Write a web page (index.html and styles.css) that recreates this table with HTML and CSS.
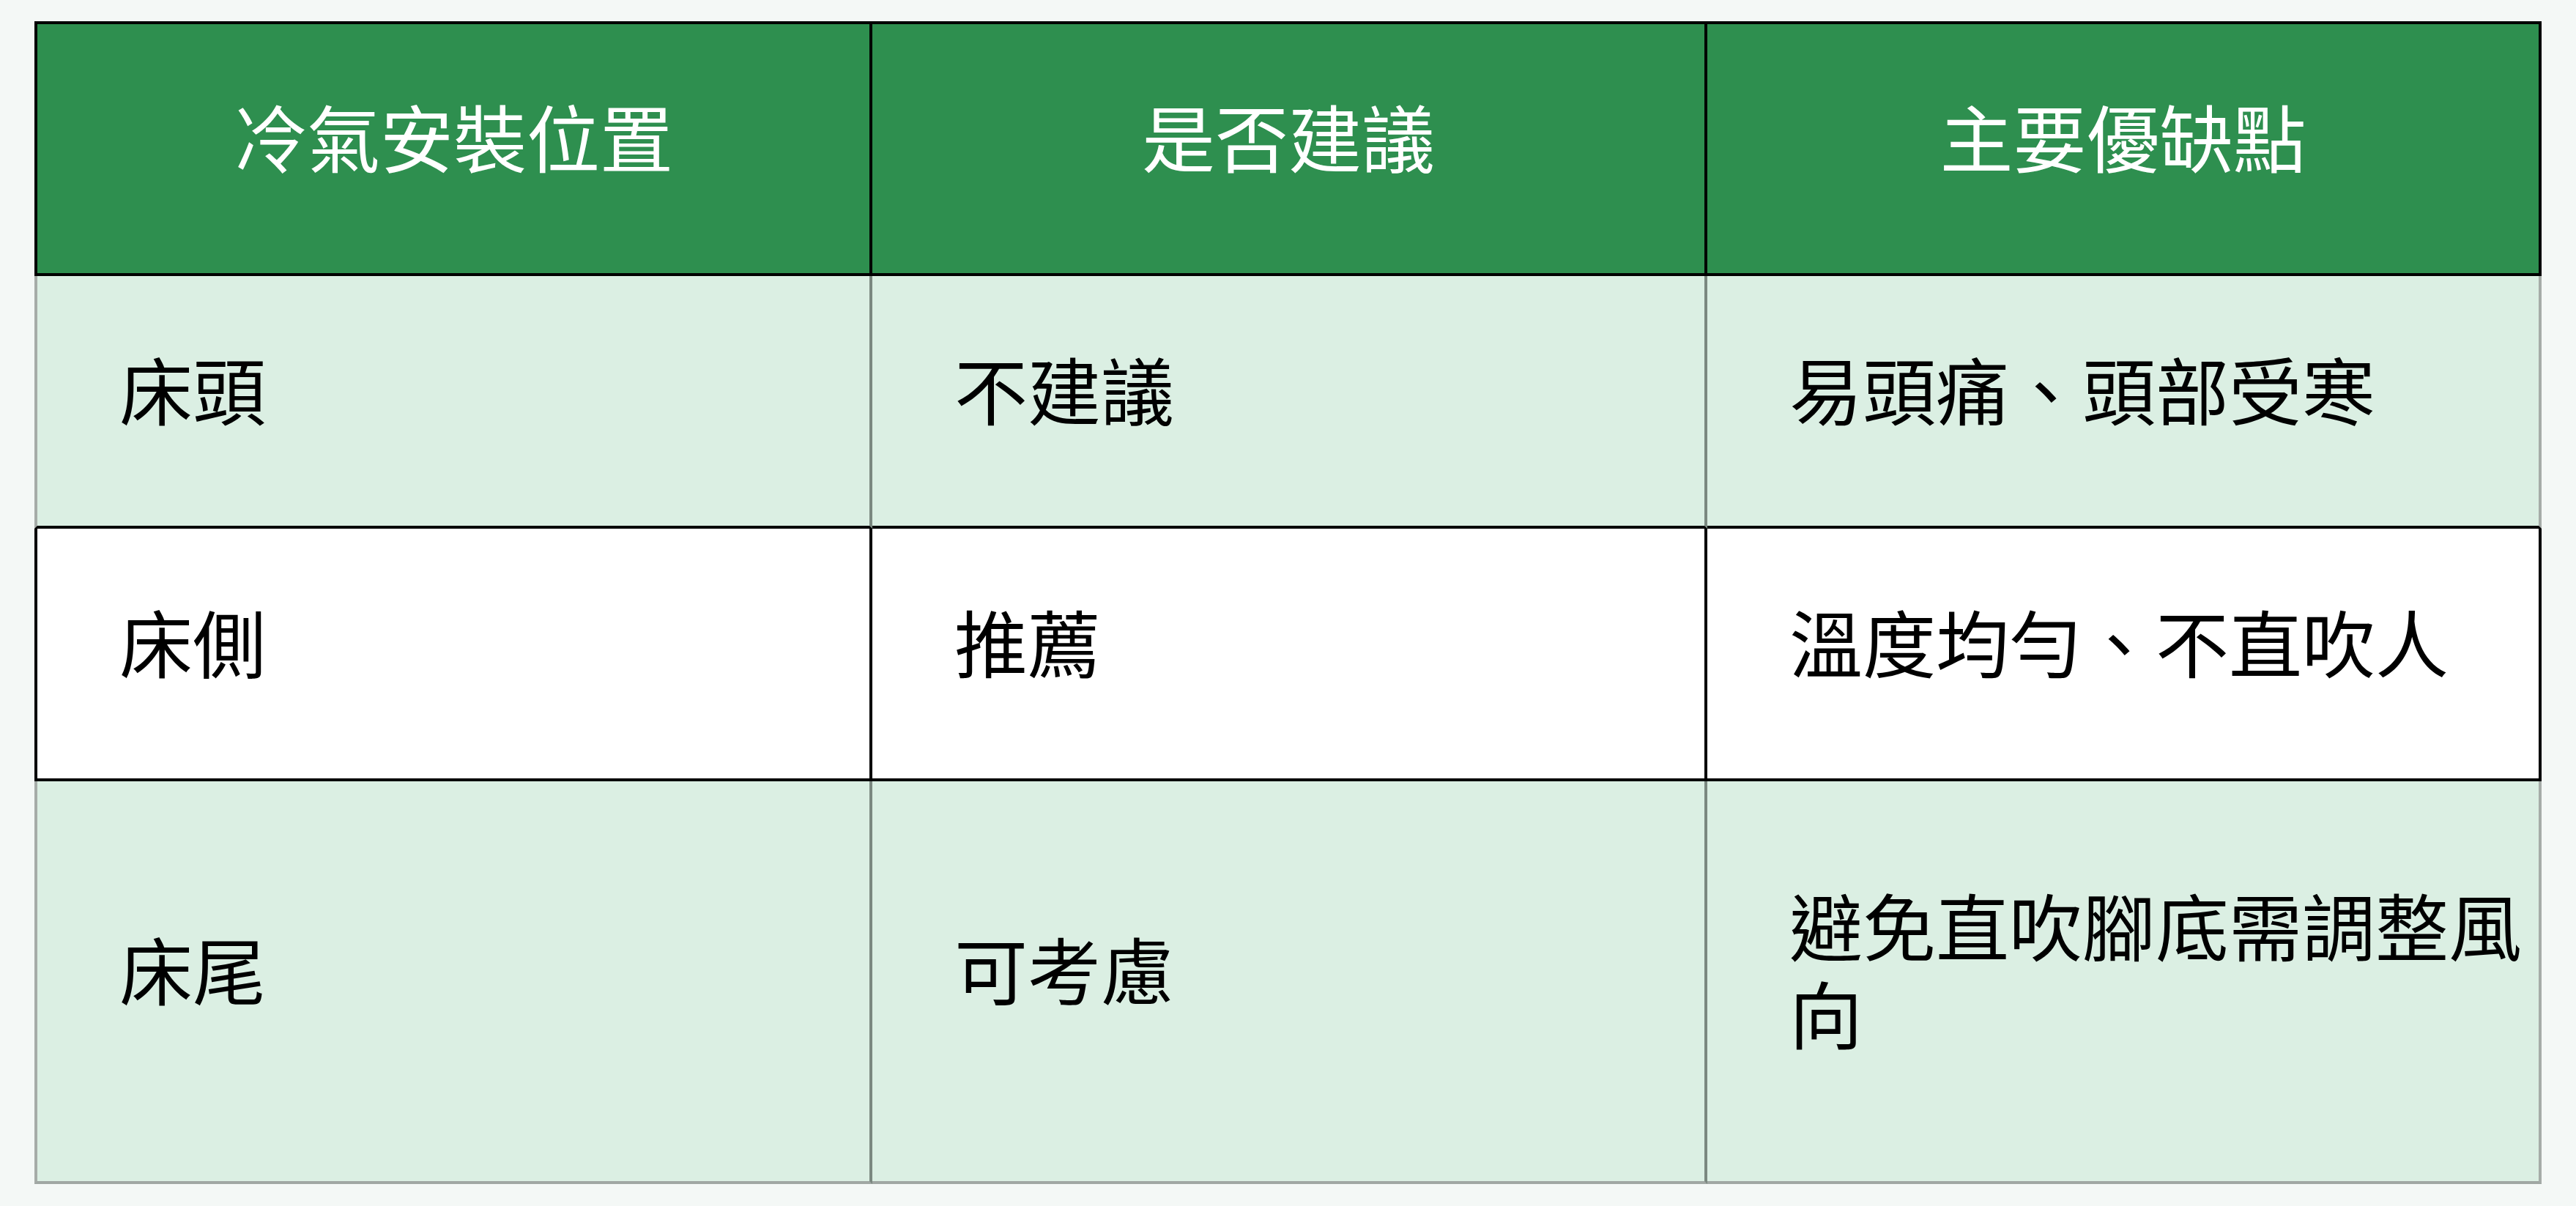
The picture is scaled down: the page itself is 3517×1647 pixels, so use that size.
FILE: index.html
```html
<!DOCTYPE html>
<html lang="zh-Hant">
<head>
<meta charset="utf-8">
<title>冷氣安裝位置</title>
<link rel="stylesheet" href="styles.css">
</head>
<body>
<div class="table">
  <div class="row head">
    <div class="cell first">冷氣安裝位置</div>
    <div class="cell">是否建議</div>
    <div class="cell last">主要優缺點</div>
  </div>
  <div class="row tint r1">
    <div class="cell first">床頭</div>
    <div class="cell">不建議</div>
    <div class="cell last">易頭痛、頭部受寒</div>
  </div>
  <div class="row plain r2">
    <div class="cell first">床側</div>
    <div class="cell">推薦</div>
    <div class="cell last">溫度均勻、不直吹人</div>
  </div>
  <div class="row tint r3 end">
    <div class="cell first">床尾</div>
    <div class="cell">可考慮</div>
    <div class="cell last">避免直吹腳底需調整風向</div>
  </div>
</div>
</body>
</html>
```

FILE: styles.css
```css
html, body {
  margin: 0;
  padding: 0;
  background: #f4f8f6;
}
body {
  font-family: "Noto Sans CJK TC", "Noto Sans CJK SC", "Noto Sans", sans-serif;
  font-size: 100px;
  line-height: 1.2;
  color: #000;
  width: 3517px;
  height: 1647px;
  overflow: hidden;
}
.table {
  margin: 29px 0 0 47px;
  width: 3423px;
  display: flex;
  flex-direction: column;
}
.row {
  display: grid;
  grid-template-columns: 1144px 1140px 1139px;
}
.cell {
  box-sizing: border-box;
  display: flex;
  align-items: center;
  padding: 0 20px 36px 112px;
  border-right: 4px solid #000;
  border-bottom: 4px solid #000;
}
.cell.first {
  border-left: 4px solid #000;
}
.head .cell {
  background: #2e8f4f;
  color: #fff;
  justify-content: center;
  padding: 0 0 36px 0;
  border-top: 4px solid #000;
  height: 348px;
}
.r1 .cell, .r2 .cell { height: 345px; }
.r3 .cell { height: 550px; }
.tint .cell {
  background: #dbefe3;
  border-right-color: #7b8880;
}
.tint .cell.first {
  border-left-color: #a6aca8;
}
.tint .cell.last {
  border-right-color: #a6aca8;
}
.end .cell {
  border-bottom-color: #a0a7a3;
}
.plain .cell {
  background: #fff;
}
```
